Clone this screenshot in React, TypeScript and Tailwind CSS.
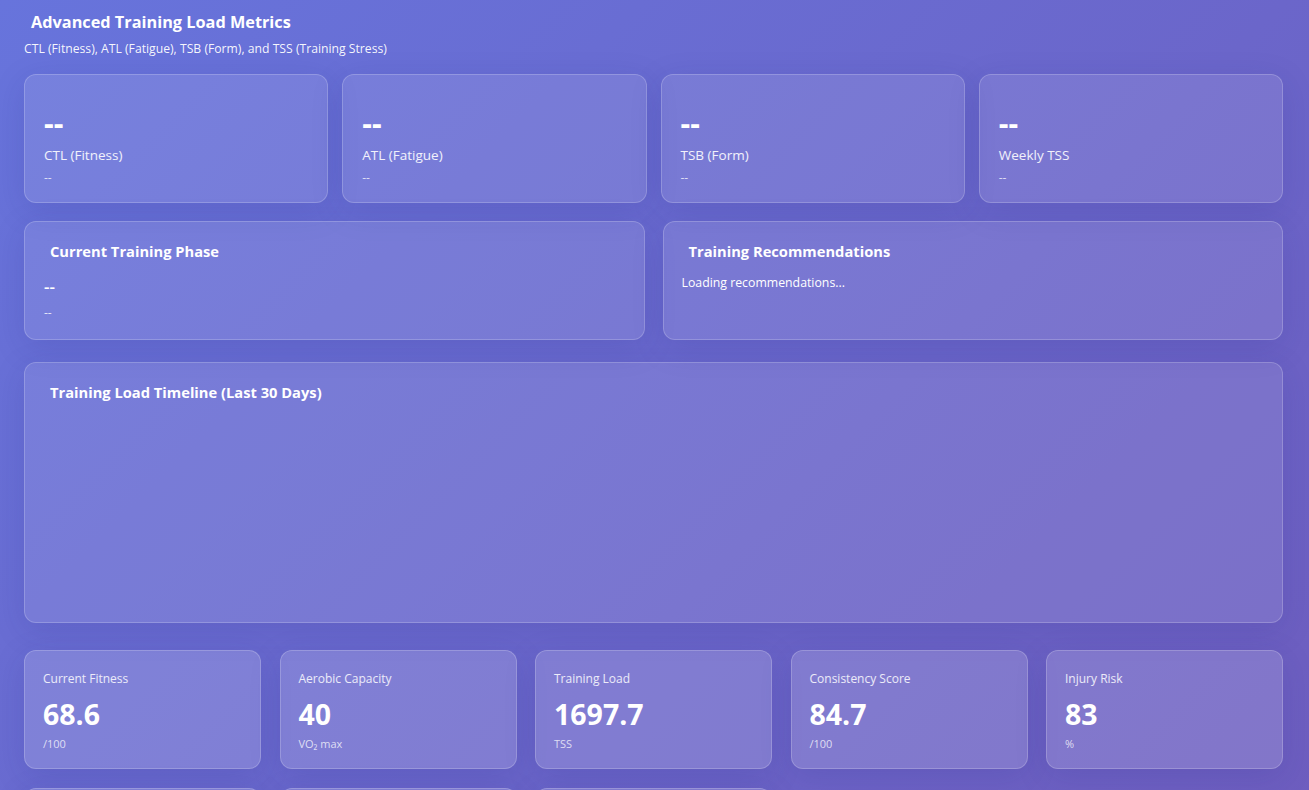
import React from "react";

const topCards = [
  { label: "CTL (Fitness)" },
  { label: "ATL (Fatigue)" },
  { label: "TSB (Form)" },
  { label: "Weekly TSS" },
];

const bottomCards = [
  { label: "Current Fitness", value: "68.6", unit: "/100" },
  { label: "Aerobic Capacity", value: "40", unit: "VO₂ max" },
  { label: "Training Load", value: "1697.7", unit: "TSS" },
  { label: "Consistency Score", value: "84.7", unit: "/100" },
  { label: "Injury Risk", value: "83", unit: "%" },
  { label: "Recovery Status", value: "72", unit: "%" },
  { label: "Efficiency", value: "91.2", unit: "/100" },
  { label: "Readiness", value: "78", unit: "/100" },
];

const card =
  "rounded-[12px] border border-white/20 bg-white/10 shadow-[0_8px_32px_rgba(31,38,135,0.15)]";

export default function App() {
  return (
    <div
      className="min-h-screen w-full bg-[linear-gradient(135deg,#6774dc_0%,#6b66ca_57%,#6e5cbd_100%)] pl-[24px] pr-[26px] pt-[10px] pb-[40px] text-white"
      style={{ fontFamily: '"Segoe UI", "Open Sans", "Noto Sans", sans-serif' }}
    >
      <h2 className="pl-[7px] text-[16.3px] font-bold leading-[24px]">Advanced Training Load Metrics</h2>
      <p className="mt-[6px] text-[12.2px] leading-[18px] text-white/95">
        CTL (Fitness), ATL (Fatigue), TSB (Form), and TSS (Training Stress)
      </p>

      <div className="mt-[16px] grid grid-cols-4 gap-[14px]">
        {topCards.map((c) => (
          <div key={c.label} className={`${card} h-[129px] px-[19px] pt-[30px]`}>
            <div className="text-[30px] font-bold leading-[36px]">--</div>
            <div className="mt-[5px] text-[13.5px] leading-[18px] text-white/90">{c.label}</div>
            <div className="mt-[6px] text-[12px] leading-[16px] text-white/75">--</div>
          </div>
        ))}
      </div>

      <div className="mt-[18px] grid grid-cols-2 gap-[18px]">
        <div className={`${card} h-[119px] px-[19px] pt-[18px]`}>
          <h3 className="pl-[6px] text-[14.7px] font-bold leading-[22px]">Current Training Phase</h3>
          <div className="mt-[14px] text-[17px] font-semibold leading-[22px]">--</div>
          <div className="mt-[7px] text-[12px] leading-[16px] text-white/80">--</div>
        </div>
        <div className={`${card} h-[119px] px-[18px] pt-[18px]`}>
          <h3 className="pl-[7px] text-[14.7px] font-bold leading-[22px]">Training Recommendations</h3>
          <div className="mt-[12px] text-[12.3px] leading-[18px]">Loading recommendations...</div>
        </div>
      </div>

      <div className={`${card} mt-[22px] h-[261px] px-[19px] pt-[18px]`}>
        <h3 className="pl-[6px] text-[14.7px] font-bold leading-[22px]">Training Load Timeline (Last 30 Days)</h3>
      </div>

      <div className="mt-[27px] grid grid-cols-5 gap-x-[18.5px] gap-y-[19px]">
        {bottomCards.map((c) => (
          <div key={c.label} className={`${card} h-[119px] bg-white/15 px-[18px] pt-[19px]`}>
            <div className="text-[12px] leading-[18px] text-white/85">{c.label}</div>
            <div className="mt-[8px] text-[28.5px] font-bold leading-[36px]">{c.value}</div>
            <div className="mt-[4px] text-[11px] leading-[16px] text-white/75">{c.unit}</div>
          </div>
        ))}
      </div>
    </div>
  );
}
